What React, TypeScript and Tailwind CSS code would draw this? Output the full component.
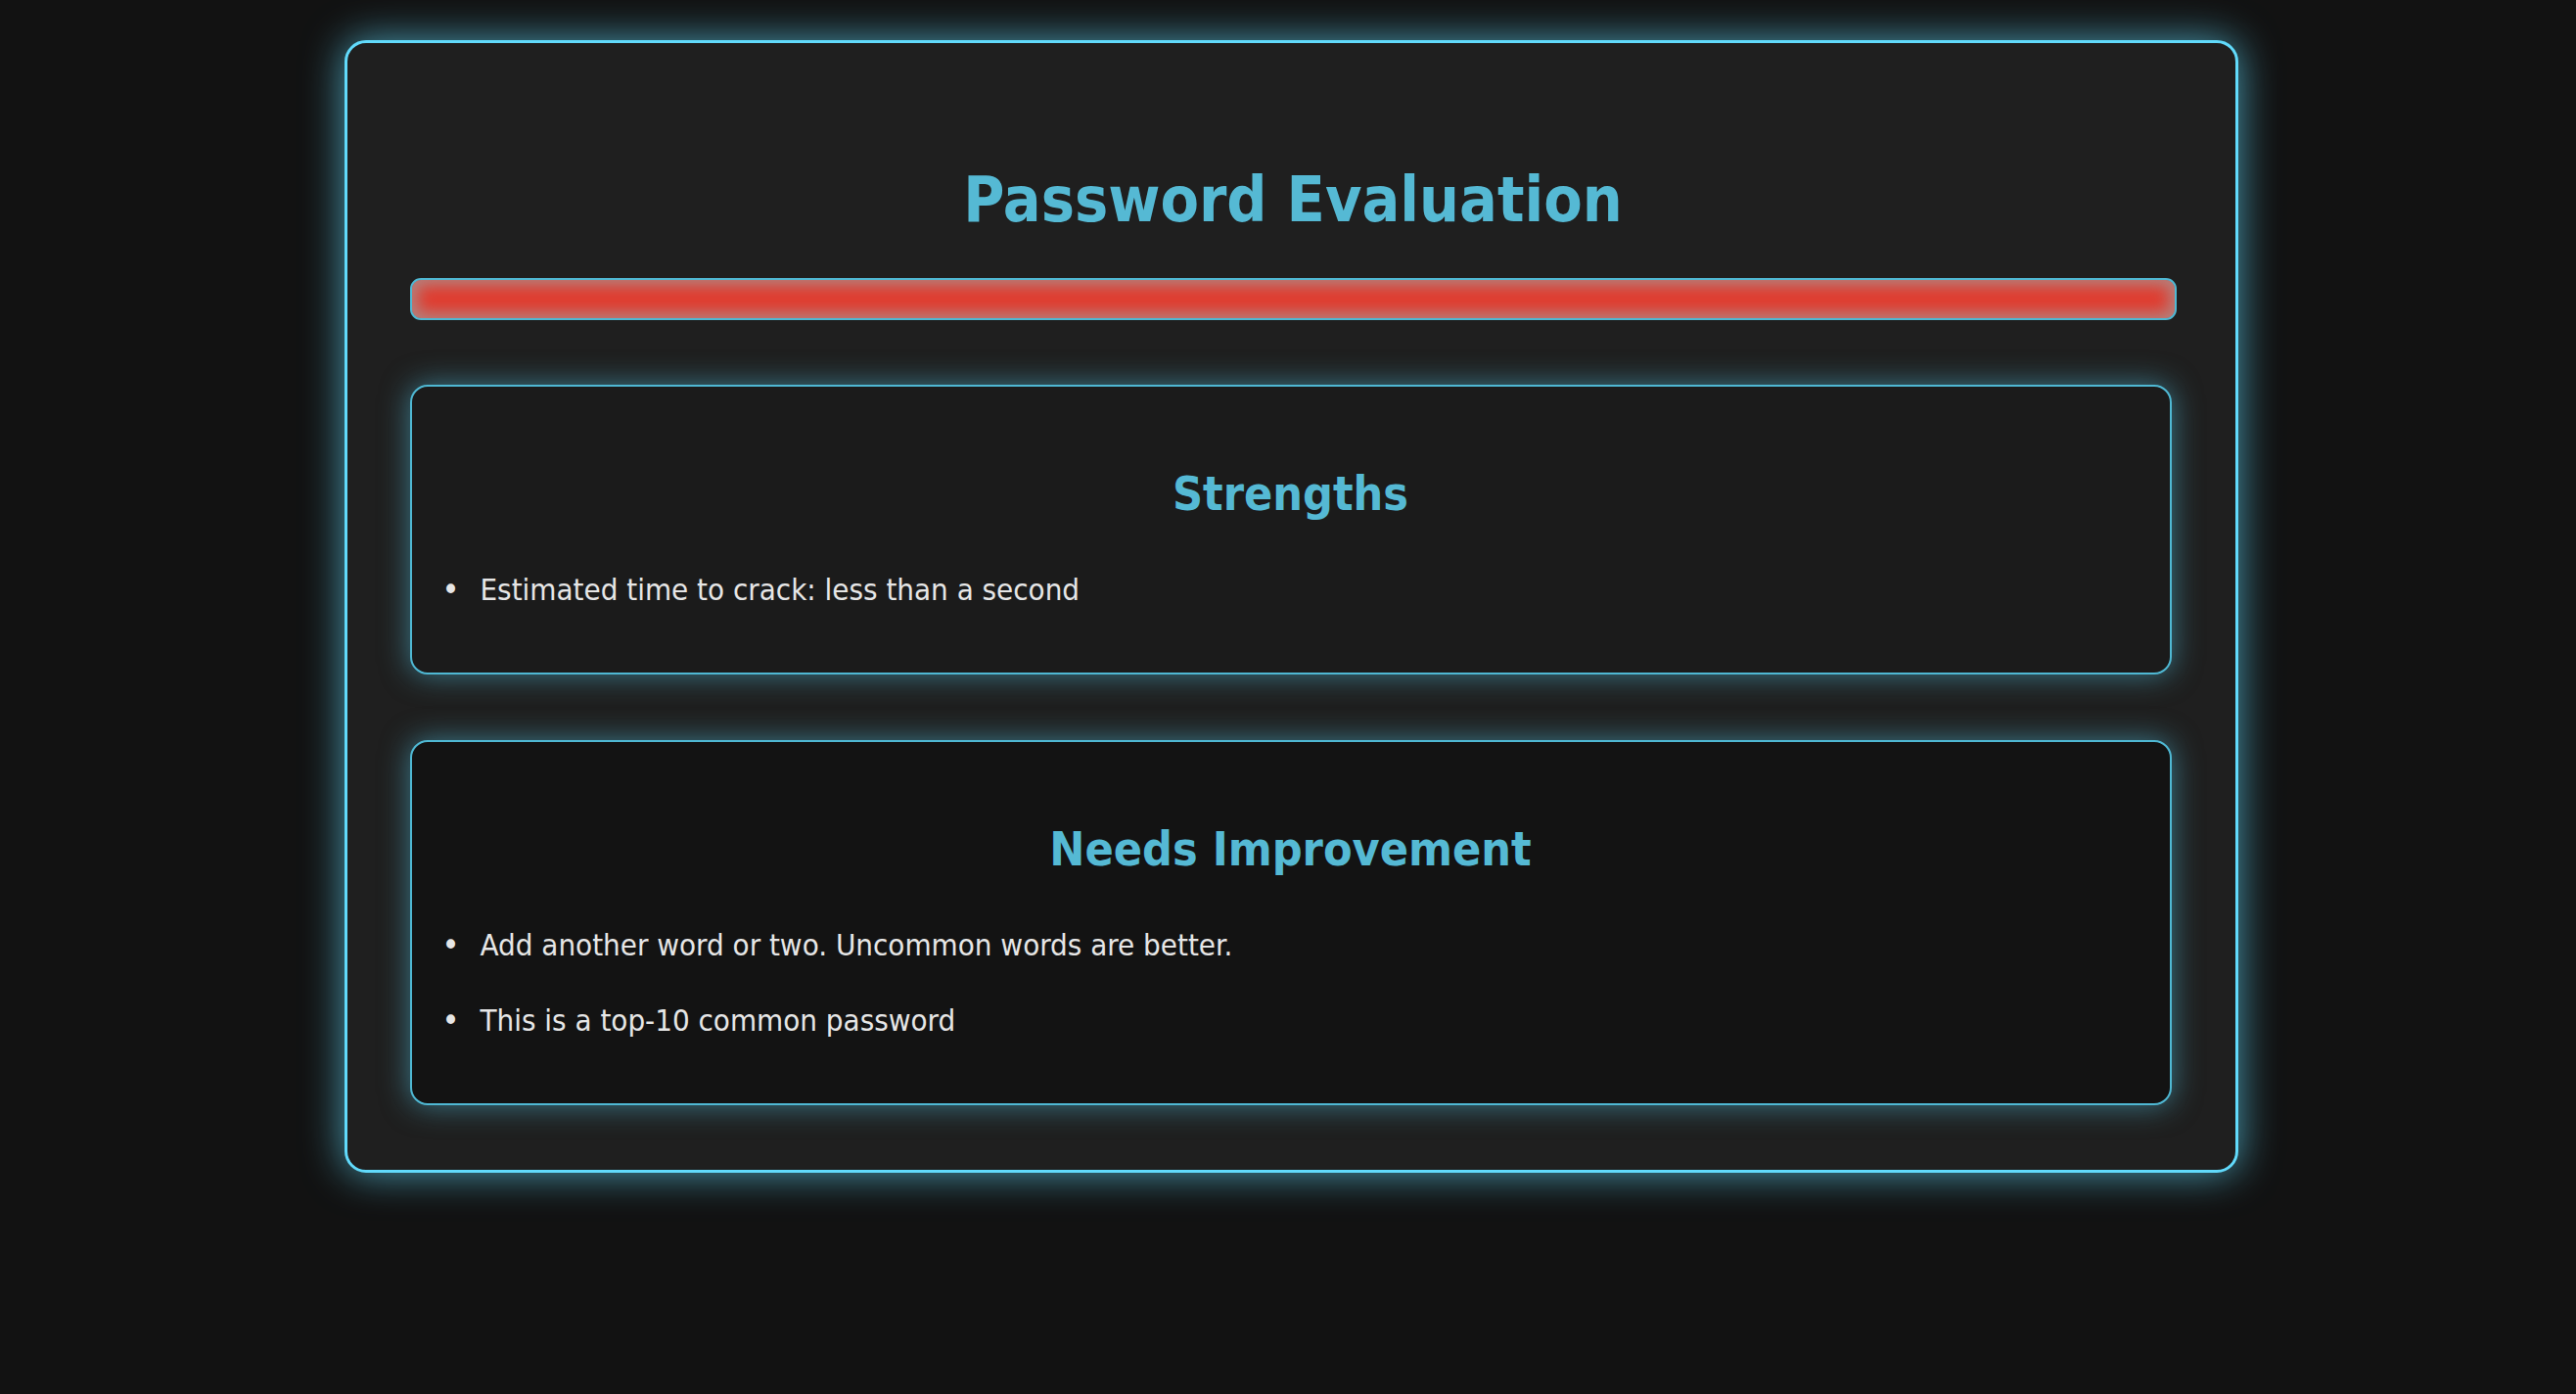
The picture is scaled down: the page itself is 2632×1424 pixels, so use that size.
import React from 'react'

const strengths = ['Estimated time to crack: less than a second']
const improvements = [
  'Add another word or two. Uncommon words are better.',
  'This is a top-10 common password',
]

function FeedbackBox({ title, items, bg }: { title: string; items: string[]; bg: string }) {
  return (
    <section
      className={`mr-[5px] rounded-[18px] border-2 border-[#4fb8d3] ${bg} pt-[79px] pb-[67px] shadow-[0_0_30px_rgba(79,184,211,0.6)]`}
    >
      <h2 className="text-center text-[48px] leading-[60px] font-bold text-[#55b9d4]">{title}</h2>
      <ul className="mt-[50px] flex flex-col gap-[41px] pl-[70px]">
        {items.map(item => (
          <li key={item} className="flex items-center text-[31px] leading-[36px] text-[#e6e6e6]">
            <span className="mr-[16px] ml-[-44px] inline-block w-[28px] text-center text-[34px] leading-[36px]">•</span>
            {item}
          </li>
        ))}
      </ul>
    </section>
  )
}

export default function App() {
  return (
    <main
      className="min-h-[1424px] w-full bg-[#121212] pt-[41px] pl-[6px]"
      style={{ fontFamily: '"DejaVu Sans Condensed", Tahoma, "DejaVu Sans", sans-serif' }}
    >
      <div className="mx-auto w-[1935px] rounded-[22px] border-[3px] border-[#61dafb] bg-[#1f1f1f] pt-[121px] pb-[66px] pl-[64px] pr-[60px] shadow-[0_0_42px_rgba(97,218,251,0.7)]">
        <h1 className="text-center text-[64px] leading-[78px] font-bold text-[#55b9d4]">Password Evaluation</h1>

        {/* strength meter */}
        <div className="mt-[41px] h-[43px] overflow-hidden rounded-[11px] border-2 border-[#4fb8d3] bg-[#e23a2d] shadow-[inset_0_0_16px_6px_rgba(160,160,160,0.7)]" />

        <div className="mt-[66px] flex flex-col gap-[67px]">
          <FeedbackBox title="Strengths" items={strengths} bg="bg-[#1b1b1b]" />
          <FeedbackBox title="Needs Improvement" items={improvements} bg="bg-[#131313]" />
        </div>
      </div>
    </main>
  )
}
